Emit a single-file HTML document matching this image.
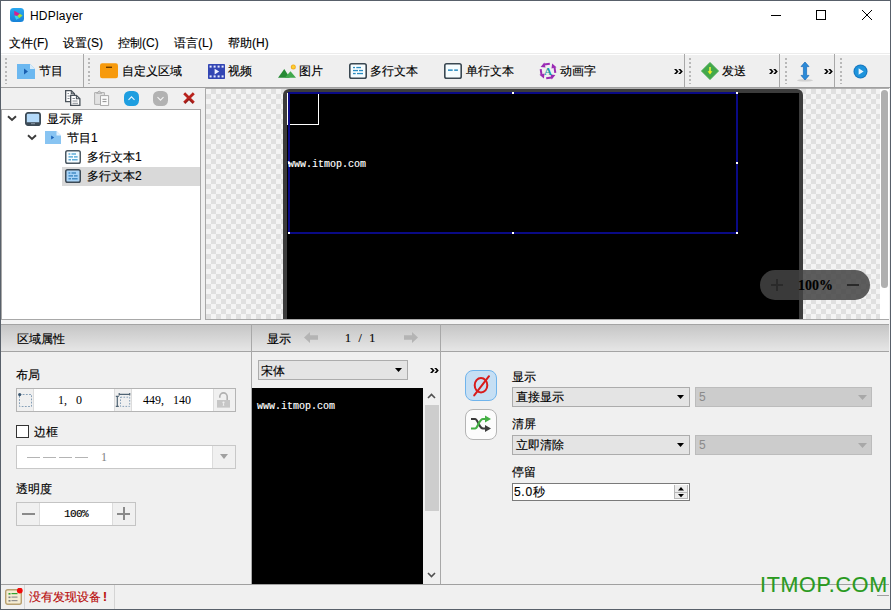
<!DOCTYPE html>
<html><head><meta charset="utf-8">
<style>
*{box-sizing:border-box;margin:0;padding:0}
html,body{width:891px;height:610px;overflow:hidden;background:#f0f0f0;font-family:"Liberation Sans",sans-serif;font-size:12px;color:#000}
.a{position:absolute}
.t{position:absolute;white-space:nowrap;line-height:14px;-webkit-text-stroke:0.15px currentColor}
.grip{position:absolute;width:2px;background:repeating-linear-gradient(to bottom,#b8b8b8 0 2px,transparent 2px 4.25px)}
.sep{position:absolute;width:1px;background:#a8a8a8}
.chk{background-color:#f4f4f4;background-image:linear-gradient(45deg,#e0e0e0 25%,transparent 25%,transparent 75%,#e0e0e0 75%),linear-gradient(45deg,#e0e0e0 25%,transparent 25%,transparent 75%,#e0e0e0 75%);background-size:10px 10px;background-position:0 0,5px 5px}
</style></head><body>
<div id="root" class="a" style="left:0;top:0;width:891px;height:610px;background:#f0f0f0">

<!-- title bar -->
<div class="a" style="left:0;top:0;width:891px;height:53px;background:#fff"></div>
<svg class="a" style="left:10px;top:8px" width="14" height="14" viewBox="0 0 14 14"><defs><linearGradient id="ig" x1="0" y1="0" x2="0" y2="1"><stop offset="0" stop-color="#2aa8f0"/><stop offset="1" stop-color="#1682d8"/></linearGradient></defs><rect width="14" height="14" rx="3.5" fill="url(#ig)"/><path d="M4.2 2.8L9.8 5.8L7.2 8L4.4 7.4Z" fill="#d8208c"/><path d="M9.8 5.8L12.6 7.4L9.2 10.2L7.2 8Z" fill="#a6e03c"/><path d="M4.4 7.4L7.2 8L9.2 10.2L6.2 11.8Z" fill="#38d4ec"/></svg>
<div class="t" style="left:30px;top:9px;font-size:12px;color:#000;letter-spacing:0.2px;-webkit-text-stroke:0">HDPlayer</div>
<!-- window controls -->
<div class="a" style="left:771px;top:15px;width:10px;height:1px;background:#000"></div>
<div class="a" style="left:816px;top:10px;width:10px;height:10px;border:1px solid #000"></div>
<svg class="a" style="left:861px;top:9px" width="12" height="12" viewBox="0 0 12 12"><path d="M1 1L11 11M11 1L1 11" stroke="#000" stroke-width="1"/></svg>

<!-- menu -->
<div class="t" style="left:9px;top:36px">文件(F)</div>
<div class="t" style="left:63px;top:36px">设置(S)</div>
<div class="t" style="left:118px;top:36px">控制(C)</div>
<div class="t" style="left:174px;top:36px">语言(L)</div>
<div class="t" style="left:228px;top:36px">帮助(H)</div>

<!-- toolbar -->
<div class="a" style="left:0;top:53px;width:891px;height:34px;background:#efefef;border-top:1px solid #ececec"></div><div class="a" style="left:0;top:54px;width:891px;height:1px;background:#fff"></div>
<div class="a" style="left:0;top:87px;width:891px;height:1px;background:#a0a0a0"></div>
<div class="grip" style="left:5px;top:58px;height:26px"></div>
<div class="sep" style="left:83px;top:54px;height:33px"></div>
<div class="grip" style="left:88px;top:58px;height:26px"></div>
<div class="sep" style="left:684px;top:54px;height:33px"></div>
<div class="grip" style="left:689px;top:58px;height:26px"></div>
<div class="sep" style="left:779px;top:54px;height:33px"></div>
<div class="grip" style="left:785px;top:58px;height:26px"></div>
<div class="sep" style="left:834px;top:54px;height:33px"></div>
<div class="grip" style="left:840px;top:58px;height:26px"></div>

<div class="t" style="left:39px;top:64px">节目</div>
<div class="t" style="left:122px;top:64px">自定义区域</div>
<div class="t" style="left:228px;top:64px">视频</div>
<div class="t" style="left:299px;top:64px">图片</div>
<div class="t" style="left:370px;top:64px">多行文本</div>
<div class="t" style="left:466px;top:64px">单行文本</div>
<div class="t" style="left:560px;top:64px">动画字</div>
<div class="t" style="left:722px;top:64px">发送</div>


<!-- toolbar icons -->
<svg class="a" style="left:17px;top:64px" width="18" height="15" viewBox="0 0 18 15"><path d="M0 0H13L18 5V15H0Z" fill="#6cb8f0"/><path d="M13 0L18 5H13Z" fill="#d8ecfa"/><path d="M7 4.5L11 7.5L7 10.5Z" fill="#1a5fb0"/></svg>
<svg class="a" style="left:100px;top:63px" width="18" height="16" viewBox="0 0 18 16"><rect x="0" y="0.3" width="18" height="15" rx="2.2" fill="#f79a0c"/><rect x="6" y="3.6" width="6" height="1.4" fill="#6a3a00"/></svg>
<svg class="a" style="left:207.5px;top:63.5px" width="17" height="15" viewBox="0 0 17 15"><rect width="17" height="15" rx="0.8" fill="#3346b4"/><g fill="#e4e8ff"><rect x="1.6" y="1.6" width="2" height="2"/><rect x="5.6" y="1.6" width="2" height="2"/><rect x="9.6" y="1.6" width="2" height="2"/><rect x="13.6" y="1.6" width="2" height="2"/><rect x="1.6" y="11.4" width="2" height="2"/><rect x="5.6" y="11.4" width="2" height="2"/><rect x="9.6" y="11.4" width="2" height="2"/><rect x="13.6" y="11.4" width="2" height="2"/></g><path d="M6.6 4.8L11.2 7.6L6.6 10.4Z" fill="#f0f2ff"/></svg>
<svg class="a" style="left:277px;top:63px" width="20" height="16" viewBox="0 0 20 16"><path d="M1 14.8L7.3 6L12.8 14.8Z" fill="#268a34"/><path d="M7.8 14.8L13.5 8.2L19 14.8Z" fill="#40a84c"/><circle cx="16.3" cy="3.9" r="2.5" fill="#f0a820"/><circle cx="16.3" cy="3.9" r="1.6" fill="#fcd030"/></svg>
<svg class="a" style="left:349px;top:63px" width="18" height="16" viewBox="0 0 18 16"><rect x="0.8" y="0.8" width="16.4" height="14.4" rx="1.8" fill="#f6fdff" stroke="#3a4852" stroke-width="1.6"/><g fill="#2a8cc0"><rect x="4" y="3.9" width="2" height="1.3"/><rect x="7.3" y="3.9" width="4.7" height="1.3"/><rect x="4" y="6.9" width="5" height="1.3"/><rect x="10" y="6.9" width="4" height="1.3"/><rect x="4" y="9.9" width="2.7" height="1.3"/><rect x="8" y="9.9" width="6" height="1.3"/></g></svg>
<svg class="a" style="left:444px;top:63px" width="18" height="16" viewBox="0 0 18 16"><rect x="0.8" y="0.8" width="16.4" height="14.4" rx="1.8" fill="#f6fdff" stroke="#3a4852" stroke-width="1.6"/><g fill="#2a8cc0"><rect x="4" y="6.4" width="4.7" height="1.5"/><rect x="10.2" y="6.4" width="3.7" height="1.5"/></g></svg>
<svg class="a" style="left:539px;top:62px" width="18" height="18" viewBox="0 0 18 18"><defs><g id="arr"><path d="M10.8 1.7L5.2 2.5" stroke="#9a2ab4" stroke-width="2"/><path d="M1.6 4.9L5.3 0.5L6.5 5.5Z" fill="#9a2ab4"/></g></defs><use href="#arr"/><use href="#arr" transform="rotate(90 9 9)"/><use href="#arr" transform="rotate(180 9 9)"/><use href="#arr" transform="rotate(270 9 9)"/><text x="9" y="12.8" font-family="Liberation Serif" font-weight="bold" font-size="11" fill="#1a9aa4" text-anchor="middle">A</text></svg>
<svg class="a" style="left:673.5px;top:69px" width="9" height="5" viewBox="0 0 9 5"><path d="M0 0H2.2L4.6 2.5L2.2 5H0L2.4 2.5Z M4.2 0H6.4L8.8 2.5L6.4 5H4.2L6.6 2.5Z" fill="#000"/></svg>
<svg class="a" style="left:701px;top:62px" width="18" height="18" viewBox="0 0 18 18"><path d="M9 0.5L17.5 9L9 17.5L0.5 9Z" fill="#42a84a" stroke="#42a84a" stroke-width="1" stroke-linejoin="round"/><path d="M9 5V10" stroke="#e8f040" stroke-width="1.6"/><path d="M6.6 9.2H11.4L9 12.6Z" fill="#f4f020"/></svg>
<svg class="a" style="left:769px;top:69px" width="9" height="5" viewBox="0 0 9 5"><path d="M0 0H2.2L4.6 2.5L2.2 5H0L2.4 2.5Z M4.2 0H6.4L8.8 2.5L6.4 5H4.2L6.6 2.5Z" fill="#000"/></svg>
<svg class="a" style="left:795px;top:61px" width="20" height="21" viewBox="0 0 20 21"><ellipse cx="10" cy="19.3" rx="8" ry="1.3" fill="#c8c8c8" opacity="0.8"/><path d="M10 1L14 5.6H11.6V14.4H14L10 19L6 14.4H8.4V5.6H6Z" fill="#2a8ad8" stroke="#1a6ab8" stroke-width="0.7" stroke-linejoin="round"/></svg>
<svg class="a" style="left:824px;top:69px" width="9" height="5" viewBox="0 0 9 5"><path d="M0 0H2.2L4.6 2.5L2.2 5H0L2.4 2.5Z M4.2 0H6.4L8.8 2.5L6.4 5H4.2L6.6 2.5Z" fill="#000"/></svg>
<svg class="a" style="left:853px;top:63.5px" width="15" height="15" viewBox="0 0 15 15"><circle cx="7.5" cy="7.5" r="7" fill="#1878c0"/><circle cx="7.5" cy="7.5" r="5.9" fill="#1e94dc"/><path d="M5.6 4.2L10.6 7.5L5.6 10.8Z" fill="#e8f6ff"/></svg>

<!-- left panel -->
<div class="a" style="left:1px;top:88px;width:204px;height:21px;background:#f0f0f0"></div>
<svg class="a" style="left:65px;top:90px" width="16" height="16" viewBox="0 0 16 16"><path d="M0.65 0.65H6.3L9.4 3.8V11.6H0.65Z" fill="#fff" stroke="#4a525a" stroke-width="1.3"/><path d="M6.3 0.65V3.8H9.4" fill="none" stroke="#4a525a" stroke-width="1.1"/><g stroke="#8a9098" stroke-width="1"><path d="M2.5 3.5H4M2.5 6H6.5M2.5 8.5H4.5"/></g><path d="M5.65 5.4H11.4L14.9 8.8V15.5H5.65Z" fill="#fff" stroke="#4a525a" stroke-width="1.3"/><path d="M11.4 5.4V8.8H14.9" fill="none" stroke="#4a525a" stroke-width="1.1"/><g stroke="#8a9098" stroke-width="1"><path d="M7.5 8.5H10M7.5 11H12.5M7.5 13.3H13"/></g></svg>
<svg class="a" style="left:94px;top:90px" width="16" height="16" viewBox="0 0 16 16"><path d="M0.6 2.6H10.4V14.4H0.6Z" fill="#e2e2e2" stroke="#b0b0b0"/><path d="M2.6 3.2L5.2 1L7.8 3.2Z" fill="#d8d8d8" stroke="#a8a8a8"/><path d="M6.5 5.6H14.6V15.6H6.5Z" fill="#fafafa" stroke="#a8a8a8"/><path d="M8.5 9.3H12.5M8.5 11.6H12.5" stroke="#909090"/></svg>
<svg class="a" style="left:123.5px;top:90.5px" width="15" height="15" viewBox="0 0 15 15"><rect width="15" height="15" rx="5.5" fill="#1e9ee0"/><path d="M4.5 8.8L7.5 5.8L10.5 8.8" stroke="#e8f6ff" stroke-width="1.1" fill="none"/></svg>
<svg class="a" style="left:152.5px;top:90.5px" width="15" height="15" viewBox="0 0 15 15"><rect width="15" height="15" rx="5.5" fill="#b2b2b2"/><path d="M4.5 6.2L7.5 9.2L10.5 6.2" stroke="#f4f4f4" stroke-width="1.1" fill="none"/></svg>
<svg class="a" style="left:182px;top:91px" width="14" height="14" viewBox="0 0 14 14"><path d="M2.2 2.2L11.8 11.8M11.8 2.2L2.2 11.8" stroke="#b8221c" stroke-width="2.8"/><path d="M7 8.5L11 12.5M7 8.5L3 12.5" stroke="#7a1010" stroke-width="1.2" opacity="0.6"/></svg>

<div class="a" style="left:1px;top:109px;width:200px;height:211px;background:#fff;border:1px solid #a8a8a8"></div>
<div class="a" style="left:201px;top:88px;width:4px;height:232px;background:#f0f0f0"></div>
<div class="a" style="left:205px;top:88px;width:1px;height:232px;background:#a8a8a8"></div>
<!-- tree -->
<svg class="a" style="left:7px;top:115px" width="10" height="7" viewBox="0 0 10 7"><path d="M1 1.2L5 5L9 1.2" stroke="#3a3a3a" stroke-width="1.9" fill="none"/></svg>
<svg class="a" style="left:25px;top:112px" width="16" height="14" viewBox="0 0 16 14"><rect x="0.9" y="0.9" width="14.2" height="12.2" rx="2.2" fill="#b4dafa" stroke="#3c4a56" stroke-width="1.8"/><rect x="1" y="10.2" width="14" height="3" rx="1" fill="#3c4a56"/><rect x="6" y="11.2" width="4" height="1" fill="#8a9aa8"/></svg>
<div class="t" style="left:47px;top:112px">显示屏</div>
<svg class="a" style="left:27px;top:134px" width="10" height="7" viewBox="0 0 10 7"><path d="M1 1.2L5 5L9 1.2" stroke="#3a3a3a" stroke-width="1.9" fill="none"/></svg>
<svg class="a" style="left:45px;top:131px" width="16" height="13" viewBox="0 0 16 13"><path d="M0 0H11.5L16 4.5V13H0Z" fill="#88c4f2"/><path d="M11.5 0L16 4.5H11.5Z" fill="#e4f2fe"/><path d="M6.2 4.6L9.2 6.5L6.2 8.4Z" fill="#1a62b8"/></svg>
<div class="t" style="left:67px;top:131px">节目1</div>
<svg class="a" style="left:65px;top:150px" width="16" height="14" viewBox="0 0 16 14"><rect x="0.75" y="0.75" width="14.5" height="12.5" rx="1.8" fill="#f6fcff" stroke="#4d5a64" stroke-width="1.5"/><g fill="#3a9ad0"><rect x="3.5" y="3.4" width="1.8" height="1.2"/><rect x="6.5" y="3.4" width="4.5" height="1.2"/><rect x="3.5" y="6.3" width="4.5" height="1.2"/><rect x="9" y="6.3" width="3.6" height="1.2"/><rect x="3.5" y="9.2" width="2.5" height="1.2"/><rect x="7" y="9.2" width="5.6" height="1.2"/></g></svg>
<div class="t" style="left:87px;top:150px">多行文本1</div>
<div class="a" style="left:62px;top:167px;width:138px;height:19px;background:#d9d9d9"></div>
<svg class="a" style="left:65px;top:169px" width="16" height="14" viewBox="0 0 16 14"><rect x="0.75" y="0.75" width="14.5" height="12.5" rx="1.8" fill="#a8d4f8" stroke="#3d4a56" stroke-width="1.5"/><g fill="#2a7ab8"><rect x="3.5" y="3.4" width="1.8" height="1.2"/><rect x="6.5" y="3.4" width="4.5" height="1.2"/><rect x="3.5" y="6.3" width="4.5" height="1.2"/><rect x="9" y="6.3" width="3.6" height="1.2"/><rect x="3.5" y="9.2" width="2.5" height="1.2"/><rect x="7" y="9.2" width="5.6" height="1.2"/></g></svg>
<div class="t" style="left:87px;top:169px">多行文本2</div>

<!-- canvas -->
<div class="a" style="left:205px;top:88px;width:684px;height:1px;background:#b0b0b0"></div><div class="a chk" style="left:206px;top:89px;width:674px;height:230px;background-position:0 0,5px 5px"></div>
<div class="a" style="left:880px;top:89px;width:9px;height:230px;background:#fff"></div>
<div class="a" style="left:881px;top:90px;width:7px;height:198px;background:#b0b0b0;border-radius:3.5px"></div>
<div class="a" style="left:206px;top:319px;width:683px;height:1px;background:#a8a8a8"></div>
<div class="a" style="left:283px;top:89px;width:520px;height:230px;background:#3c3c3c;border-radius:6px 6px 0 0"></div>
<div class="a" style="left:287px;top:93px;width:512px;height:226px;background:#000"></div>
<div class="a" style="left:287px;top:93px;width:32px;height:32px;border:1px solid #fff"></div>
<div class="a" style="left:288px;top:92px;width:450px;height:142px;border:2px solid #0a0a85"></div>
<div class="a" style="left:512px;top:92px;width:2px;height:2px;background:#fff"></div>
<div class="a" style="left:736px;top:92px;width:2px;height:2px;background:#fff"></div>
<div class="a" style="left:736px;top:162px;width:2px;height:2px;background:#fff"></div>
<div class="a" style="left:736px;top:232px;width:2px;height:2px;background:#fff"></div>
<div class="a" style="left:512px;top:232px;width:2px;height:2px;background:#fff"></div>
<div class="a" style="left:288px;top:232px;width:2px;height:2px;background:#fff"></div>
<div class="a" style="left:288px;top:162px;width:2px;height:2px;background:#fff"></div>
<div class="t" style="left:288px;top:158px;color:#fff;font-family:'Liberation Mono',monospace;font-size:10px;letter-spacing:0px">www.itmop.com</div>
<div class="a" style="left:760px;top:270px;width:110px;height:30px;border-radius:15px;background:rgba(67,67,67,0.86)"></div>
<div class="a" style="left:771px;top:284px;width:12px;height:1.5px;background:#2a2a2a"></div>
<div class="a" style="left:776px;top:279px;width:1.5px;height:12px;background:#2a2a2a"></div>
<div class="t" style="left:798px;top:279px;font-family:'Liberation Serif',serif;font-weight:bold;font-size:14px;color:#000">100%</div>
<div class="a" style="left:847px;top:284px;width:12px;height:1.5px;background:#2a2a2a"></div>

<!-- bottom panel -->
<div class="a" style="left:1px;top:320px;width:888px;height:4px;background:#f4f4f4"></div>
<div class="a" style="left:1px;top:324px;width:888px;height:28px;background:linear-gradient(to bottom,#c6c6c6,#e6e6e6);border-top:1px solid #a4a4a4;border-bottom:1px solid #a4a4a4"></div>
<div class="a" style="left:251px;top:324px;width:1px;height:261px;background:#a8a8a8"></div>
<div class="a" style="left:440px;top:324px;width:1px;height:261px;background:#a8a8a8"></div>
<div class="a" style="left:1px;top:584px;width:888px;height:1px;background:#a0a0a0"></div>
<div class="t" style="left:17px;top:332px">区域属性</div>
<div class="t" style="left:267px;top:332px">显示</div>
<svg class="a" style="left:304px;top:332px" width="14" height="11" viewBox="0 0 14 11"><path d="M0 5.5L6 0V3.3H14V7.7H6V11Z" fill="#b4b4b4"/></svg>
<div class="t" style="left:345px;top:331px;font-family:'Liberation Serif',serif;font-size:12px;word-spacing:4.5px">1 / 1</div>
<svg class="a" style="left:404px;top:332px" width="14" height="11" viewBox="0 0 14 11"><path d="M14 5.5L8 0V3.3H0V7.7H8V11Z" fill="#b4b4b4"/></svg>

<!-- left section -->
<div class="t" style="left:16px;top:368px">布局</div>
<div class="a" style="left:16px;top:388px;width:220px;height:24px;background:#fff;border:1px solid #b4b4b4"></div>
<div class="a" style="left:17px;top:389px;width:17px;height:22px;background:#f0f0f0;border-right:1px solid #dcdcdc"></div>
<svg class="a" style="left:18px;top:392px" width="15" height="16" viewBox="0 0 15 16"><rect x="1.5" y="2.5" width="12" height="12" fill="none" stroke="#86a0b8" stroke-dasharray="1.8 1.4"/><circle cx="1.7" cy="2.6" r="1.6" fill="#3a5670"/></svg>
<div class="t" style="left:58px;top:393px;font-family:'Liberation Serif',serif;-webkit-text-stroke:0">1<span style="display:inline-block;width:12px">,</span>0</div>
<div class="a" style="left:114px;top:389px;width:18px;height:22px;background:#f0f0f0;border-left:1px solid #dcdcdc;border-right:1px solid #dcdcdc"></div>
<svg class="a" style="left:114px;top:392px" width="17" height="17" viewBox="0 0 17 17"><g stroke="#506474" stroke-width="1.2" fill="none"><path d="M3.3 4.3V14.4M1.8 4.3H4.8M1.8 14.4H4.8M5.2 2.3H15.7M5.2 1V3.6M15.7 1V3.6"/></g><rect x="6.5" y="5.2" width="9.2" height="9.2" fill="none" stroke="#86a0b8" stroke-dasharray="1.6 1.4"/></svg>
<div class="t" style="left:143px;top:393px;font-family:'Liberation Serif',serif;-webkit-text-stroke:0">449<span style="display:inline-block;width:12px">,</span>140</div>
<div class="a" style="left:213px;top:389px;width:22px;height:22px;background:#f0f0f0;border-left:1px solid #dcdcdc"></div>
<svg class="a" style="left:216px;top:391px" width="15" height="17" viewBox="0 0 15 17"><path d="M3.8 6.8V5.6A3.7 3.7 0 0 1 11.2 5.6V9.5" stroke="#b0b0b0" stroke-width="1.6" fill="none"/><rect x="1" y="9" width="13" height="7.6" fill="#c6c6c6"/><circle cx="7.5" cy="11.6" r="1.1" fill="#eeeeee"/><path d="M7.5 11.4L6.7 14.8H8.3Z" fill="#eeeeee"/></svg>

<div class="a" style="left:16px;top:425px;width:13px;height:13px;border:1px solid #333;background:#fff"></div>
<div class="t" style="left:34px;top:425px">边框</div>
<div class="a" style="left:16px;top:445px;width:220px;height:24px;background:#fff;border:1px solid #c8c8c8"></div>
<div class="a" style="left:27px;top:457px;width:64px;height:1px;background:repeating-linear-gradient(to right,#b4b4b4 0 13px,transparent 13px 16px)"></div>
<div class="t" style="left:101px;top:450px;color:#808080;font-family:'Liberation Serif',serif;-webkit-text-stroke:0">1</div>
<div class="a" style="left:212px;top:446px;width:23px;height:22px;background:#f0f0f0;border-left:1px solid #dcdcdc"></div>
<svg class="a" style="left:220px;top:454px" width="8" height="5" viewBox="0 0 8 5"><path d="M0 0H8L4 5Z" fill="#a0a0a0"/></svg>

<div class="t" style="left:16px;top:482px">透明度</div>
<div class="a" style="left:16px;top:502px;width:120px;height:24px;background:#fff;border:1px solid #c4c4c4"></div>
<div class="a" style="left:17px;top:503px;width:23px;height:22px;background:#f0f0f0;border-right:1px solid #dcdcdc"></div>
<div class="a" style="left:22px;top:513px;width:13px;height:2px;background:#8a8a8a"></div>
<div class="t" style="left:64px;top:507px;font-family:'Liberation Mono',monospace;font-size:11px;letter-spacing:-0.6px">100%</div>
<div class="a" style="left:112px;top:503px;width:23px;height:22px;background:#f0f0f0;border-left:1px solid #dcdcdc"></div>
<div class="a" style="left:117px;top:513px;width:13px;height:2px;background:#8a8a8a"></div>
<div class="a" style="left:123px;top:507px;width:2px;height:13px;background:#8a8a8a"></div>

<!-- middle section -->
<div class="a" style="left:258px;top:360px;width:150px;height:20px;background:#e4e4e4;border:1px solid #acacac"></div>
<div class="t" style="left:261px;top:364px">宋体</div>
<svg class="a" style="left:395px;top:368px" width="7" height="4" viewBox="0 0 7 4"><path d="M0 0H7L3.5 4Z" fill="#000"/></svg>
<svg class="a" style="left:429.5px;top:368px" width="9" height="5" viewBox="0 0 9 5"><path d="M0 0H2.2L4.6 2.5L2.2 5H0L2.4 2.5Z M4.2 0H6.4L8.8 2.5L6.4 5H4.2L6.6 2.5Z" fill="#000"/></svg>
<div class="a" style="left:252px;top:388px;width:171px;height:196px;background:#000"></div>
<div class="t" style="left:257px;top:400px;color:#fff;font-family:'Liberation Mono',monospace;font-size:10px">www.itmop.com</div>
<div class="a" style="left:423px;top:388px;width:17px;height:196px;background:#f0f0f0"></div>
<svg class="a" style="left:427px;top:393px" width="9" height="6" viewBox="0 0 9 6"><path d="M1 5L4.5 1.5L8 5" stroke="#505050" stroke-width="1.6" fill="none"/></svg>
<div class="a" style="left:425px;top:405px;width:14px;height:106px;background:#cdcdcd"></div>
<svg class="a" style="left:427px;top:572px" width="9" height="6" viewBox="0 0 9 6"><path d="M1 1L4.5 4.5L8 1" stroke="#505050" stroke-width="1.6" fill="none"/></svg>

<!-- right section -->
<div class="a" style="left:465px;top:370px;width:32px;height:31px;border-radius:8px;background:#c6dff4;border:1px solid #70b4ec"></div>
<svg class="a" style="left:470px;top:373px" width="22" height="26" viewBox="0 0 22 26"><ellipse cx="11" cy="12.3" rx="6.3" ry="7.3" fill="none" stroke="#d81c1c" stroke-width="2"/><path d="M19 3.2L4.2 22.4" stroke="#d81c1c" stroke-width="2" stroke-linecap="round"/></svg>
<div class="a" style="left:465px;top:409px;width:32px;height:31px;border-radius:8px;background:#fcfcfc;border:1px solid #b4b4b4"></div>
<svg class="a" style="left:468px;top:413px" width="26" height="22" viewBox="0 0 26 22"><path d="M3 6H7C10 6 11 15.5 15 15.5H19" stroke="#3c3c3c" stroke-width="2.2" fill="none"/><path d="M17 12L23 15.5L17 19Z" fill="#3c3c3c"/><path d="M3 15.5H7C10 15.5 11 6 15 6H19" stroke="#44b044" stroke-width="2.2" fill="none"/><path d="M17 2.5L23 6L17 9.5Z" fill="#44b044"/></svg>
<div class="t" style="left:512px;top:370px">显示</div>
<div class="a" style="left:512px;top:387px;width:178px;height:20px;background:#e4e4e4;border:1px solid #acacac"></div>
<div class="t" style="left:516px;top:390px">直接显示</div>
<svg class="a" style="left:677px;top:395px" width="7" height="4" viewBox="0 0 7 4"><path d="M0 0H7L3.5 4Z" fill="#000"/></svg>
<div class="a" style="left:695px;top:387px;width:177px;height:20px;background:#cccccc;border:1px solid #bcbcbc"></div>
<div class="t" style="left:699px;top:390px;color:#8a8a8a;-webkit-text-stroke:0">5</div>
<svg class="a" style="left:858px;top:395px" width="9" height="5" viewBox="0 0 9 5"><path d="M0 0H9L4.5 5Z" fill="#a8a8a8"/></svg>
<div class="t" style="left:512px;top:417px">清屏</div>
<div class="a" style="left:512px;top:435px;width:178px;height:20px;background:#e4e4e4;border:1px solid #acacac"></div>
<div class="t" style="left:516px;top:438px">立即清除</div>
<svg class="a" style="left:677px;top:443px" width="7" height="4" viewBox="0 0 7 4"><path d="M0 0H7L3.5 4Z" fill="#000"/></svg>
<div class="a" style="left:695px;top:435px;width:177px;height:20px;background:#cccccc;border:1px solid #bcbcbc"></div>
<div class="t" style="left:699px;top:438px;color:#8a8a8a;-webkit-text-stroke:0">5</div>
<svg class="a" style="left:858px;top:443px" width="9" height="5" viewBox="0 0 9 5"><path d="M0 0H9L4.5 5Z" fill="#a8a8a8"/></svg>
<div class="t" style="left:512px;top:465px">停留</div>
<div class="a" style="left:512px;top:483px;width:178px;height:18px;background:#fff;border:1px solid #7a7a7a"></div>
<div class="t" style="left:514px;top:485px"><span style="letter-spacing:0.7px">5.0</span>秒</div>
<div class="a" style="left:674px;top:485px;width:14px;height:14px;background:#ececec;border:1px solid #b8b8b8;border-top:none"></div><div class="a" style="left:675px;top:492px;width:12px;height:1px;background:#b8b8b8"></div>
<svg class="a" style="left:678px;top:487px" width="6" height="11" viewBox="0 0 6 11"><path d="M0 3.5H6L3 0Z" fill="#000"/><path d="M0 7H6L3 10.2Z" fill="#000"/></svg>

<!-- status bar -->
<svg class="a" style="left:5px;top:587.5px" width="18" height="17" viewBox="0 0 18 17"><rect x="0.7" y="1.7" width="15.6" height="14.6" rx="2" fill="#f4ecd4" stroke="#b8a070" stroke-width="1.4"/><rect x="3.5" y="5" width="2" height="1.6" fill="#30a030"/><rect x="6.5" y="5" width="6" height="1.2" fill="#30a030"/><rect x="3.5" y="8.5" width="2" height="1.6" fill="#808080"/><rect x="6.5" y="8.5" width="6" height="1.2" fill="#909090"/><rect x="3.5" y="12" width="2" height="1.6" fill="#808080"/><rect x="6.5" y="12" width="6" height="1.2" fill="#909090"/><circle cx="14.8" cy="2.6" r="2.9" fill="#f00c0c"/></svg>
<div class="a" style="left:24px;top:585px;width:1px;height:24px;background:#d4d4d4"></div>
<div class="t" style="left:29px;top:590px;color:#b80a0a">没有发现设备<b style="font-weight:bold;margin-left:2px">!</b></div>
<div class="a" style="left:114px;top:585px;width:1px;height:24px;background:#d4d4d4"></div>
<div class="t" style="left:760px;top:574px;color:#2a9a1e;font-size:21.5px;line-height:22px;letter-spacing:0.7px">ITMOP.COM</div>
<div class="a" style="left:877px;top:595px;width:12px;height:1px;background:#a0a0a0"></div>

<!-- window border -->
<div class="a" style="left:0;top:0;width:891px;height:610px;border:1px solid #58606a;pointer-events:none"></div>

</div>
</body></html>
